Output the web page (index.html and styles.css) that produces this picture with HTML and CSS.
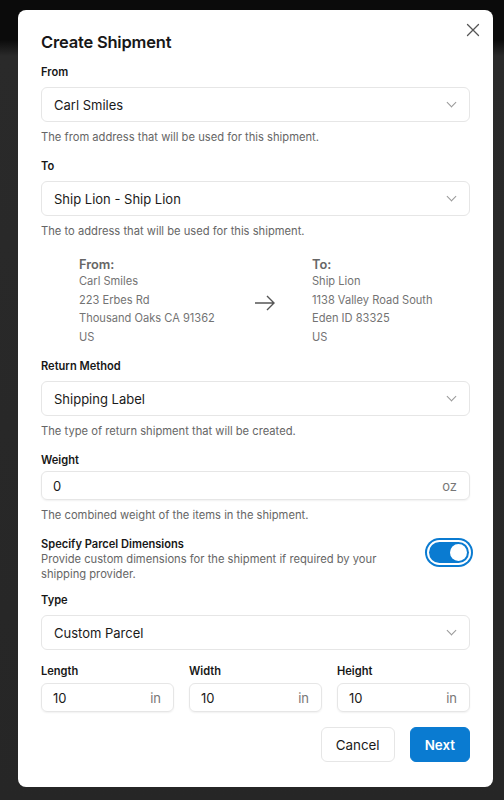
FILE: index.html
```html
<!DOCTYPE html>
<html lang="en">
<head>
    <meta charset="UTF-8">
    <meta name="viewport" content="width=device-width, initial-scale=1.0">
    <title>Create Shipment</title>
    <link rel="stylesheet" href="styles.css">
</head>
<body>
    <div class="backdrop">
        <div class="modal">
            <button class="close" aria-label="Close">
                <svg width="14" height="14" viewBox="0 0 14 14"><path d="M1.5 1.5l11 11M12.5 1.5l-11 11" stroke="#555" stroke-width="1.3" fill="none" stroke-linecap="round"/></svg>
            </button>
            <h1>Create Shipment</h1>

            <div class="field">
                <label>From</label>
                <div class="select">Carl Smiles <span class="chev"></span></div>
                <p class="help">The from address that will be used for this shipment.</p>
            </div>

            <div class="field">
                <label>To</label>
                <div class="select">Ship Lion - Ship Lion <span class="chev"></span></div>
                <p class="help">The to address that will be used for this shipment.</p>
            </div>

            <div class="addresses">
                <div class="addr">
                    <h3>From:</h3>
                    <p>Carl Smiles</p>
                    <p>223 Erbes Rd</p>
                    <p>Thousand Oaks CA 91362</p>
                    <p>US</p>
                </div>
                <div class="arrow">
                    <svg width="22" height="16" viewBox="0 0 22 16"><path d="M1 8h19M13 1l7 7-7 7" stroke="#555" stroke-width="1.4" fill="none"/></svg>
                </div>
                <div class="addr">
                    <h3>To:</h3>
                    <p>Ship Lion</p>
                    <p>1138 Valley Road South</p>
                    <p>Eden ID 83325</p>
                    <p>US</p>
                </div>
            </div>

            <div class="field">
                <label>Return Method</label>
                <div class="select">Shipping Label <span class="chev"></span></div>
                <p class="help">The type of return shipment that will be created.</p>
            </div>

            <div class="field">
                <label class="tight">Weight</label>
                <div class="input">0 <span class="unit">oz</span></div>
                <p class="help">The combined weight of the items in the shipment.</p>
            </div>

            <div class="switch-row">
                <div>
                    <label>Specify Parcel Dimensions</label>
                    <p class="help">Provide custom dimensions for the shipment if required by your shipping provider.</p>
                </div>
                <div class="toggle"><span class="knob"></span></div>
            </div>

            <div class="field">
                <label>Type</label>
                <div class="select">Custom Parcel <span class="chev"></span></div>
            </div>

            <div class="dims">
                <div>
                    <label class="tight">Length</label>
                    <div class="input">10 <span class="unit">in</span></div>
                </div>
                <div>
                    <label class="tight">Width</label>
                    <div class="input">10 <span class="unit">in</span></div>
                </div>
                <div>
                    <label class="tight">Height</label>
                    <div class="input">10 <span class="unit">in</span></div>
                </div>
            </div>

            <div class="actions">
                <button class="btn">Cancel</button>
                <button class="btn primary">Next</button>
            </div>
        </div>
    </div>
</body>
</html>
```

FILE: styles.css
```css
body {
    margin: 0;
    font-family: Inter, "Noto Sans", sans-serif;
    background: #262626;
    color: #171717;
}
.backdrop {
    min-height: 800px;
    padding: 10px 11px 0 18px;
    box-sizing: border-box;
    background: linear-gradient(#0b0b0b 0, #0b0b0b 40px, #2a2a2a 56px, #262626 100%);
}
.modal {
    position: relative;
    width: 475px;
    height: 777px;
    box-sizing: border-box;
    background: #fff;
    border-radius: 8px;
    padding: 21px 23px 0 23px;
}
.close {
    position: absolute;
    top: 13px;
    right: 13px;
    border: 0;
    background: none;
    padding: 0;
    width: 14px;
    height: 14px;
}
h1 {
    margin: 0 0 12px;
    font-size: 16.5px;
    font-weight: 600;
    letter-spacing: -0.2px;
    line-height: 22px;
}
label {
    display: block;
    font-size: 11.1px;
    font-weight: 600;
    line-height: 14px;
    margin-bottom: 8px;
}
label.tight {
    margin-bottom: 4px;
}
.field {
    margin-bottom: 14px;
}
.select, .input {
    display: flex;
    align-items: center;
    justify-content: space-between;
    border: 1px solid #e6e6e6;
    border-radius: 6px;
    box-sizing: border-box;
    font-size: 13px;
    color: #1a1a1a;
}
.select {
    height: 35px;
    padding: 0 14px 0 12px;
}
.input {
    height: 29px;
    padding: 0 12px 0 11px;
    box-shadow: 0 1px 2px rgba(0,0,0,0.06);
}
.chev {
    width: 6px;
    height: 6px;
    border-right: 1px solid #999;
    border-bottom: 1px solid #999;
    transform: rotate(45deg);
    margin-top: -4px;
}
.unit {
    color: #777;
    font-size: 13px;
}
.help {
    margin: 8px 0 0;
    font-size: 11.2px;
    line-height: 15px;
    color: #666;
}
.addresses {
    display: flex;
    align-items: center;
    padding: 4px 0 0 38px;
    margin: 0 0 13px;
}
.addr {
    flex: 0 0 175px;
    color: #737373;
    font-size: 11.1px;
}
.addr h3 {
    margin: 0;
    font-size: 12.8px;
    line-height: 15px;
    font-weight: 600;
    color: #666;
}
.addr p {
    margin: 0;
    line-height: 18.5px;
}
.arrow {
    flex: 0 0 58px;
    padding-top: 6px;
}
.switch-row {
    display: flex;
    align-items: flex-start;
    justify-content: space-between;
    margin: 0 0 11px;
}
.switch-row label {
    margin-bottom: 0;
}
.switch-row .help {
    margin-top: 1px;
    width: 350px;
}
.toggle {
    width: 40px;
    height: 21px;
    border-radius: 11px;
    background: #0a7bd1;
    box-shadow: 0 0 0 2px #fff, 0 0 0 4px #0a7bd1;
    margin: 5px 1px 0 0;
    position: relative;
}
.knob {
    position: absolute;
    right: 2px;
    top: 2px;
    width: 17px;
    height: 17px;
    border-radius: 50%;
    background: #fff;
}
.dims {
    display: grid;
    grid-template-columns: repeat(3, 1fr);
    gap: 15px;
    margin-top: 2px;
}
.dims label {
    margin-bottom: 5px;
}
.actions {
    display: flex;
    justify-content: flex-end;
    gap: 15px;
    margin-top: 15px;
}
.btn {
    height: 35px;
    padding: 0 14px;
    border: 1px solid #e6e6e6;
    border-radius: 6px;
    background: #fff;
    font-family: inherit;
    font-size: 13.4px;
    color: #1a1a1a;
}
.btn.primary {
    background: #0a7bd1;
    border-color: #0a7bd1;
    color: #fff;
    font-weight: 600;
    padding: 0 14px;
}
```
